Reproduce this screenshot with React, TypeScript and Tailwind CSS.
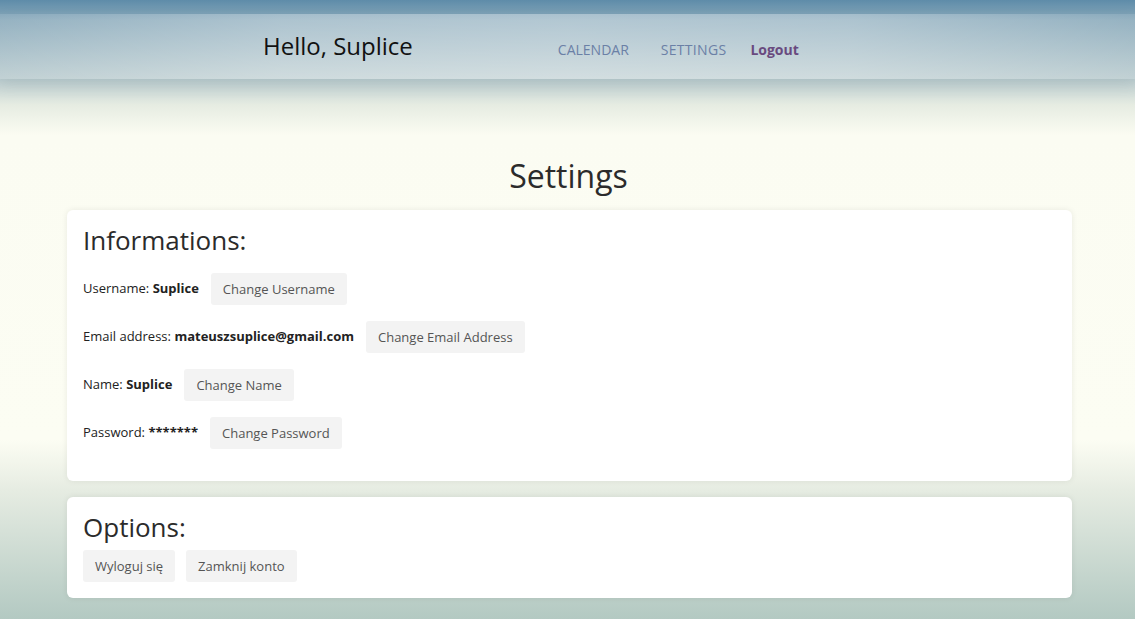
import React from "react";

const rows = [
  { label: "Username:", value: "Suplice", action: "Change Username" },
  { label: "Email address:", value: "mateuszsuplice@gmail.com", action: "Change Email Address" },
  { label: "Name:", value: "Suplice", action: "Change Name" },
  { label: "Password:", value: "*******", action: "Change Password" },
];

const Btn = ({ children }: { children: React.ReactNode }) => (
  <button className="h-8 px-3 rounded-[3px] bg-[#f3f3f3] text-[13px] text-[#555] leading-8">
    {children}
  </button>
);

export default function App() {
  return (
    <div
      className="min-h-screen h-[619px] overflow-hidden bg-[linear-gradient(to_bottom,#5e8ca9_0px,#8aaabb_20px,#bccdd0_80px,#e6ece2_105px,#fbfcf2_135px,#fcfdf3_440px,#e6ece2_490px,#b3c9c2_619px)] text-[#222]"
      style={{ fontFamily: '"Open Sans", "Liberation Sans", sans-serif' }}
    >
      <header className="mt-[14px] h-[65px] bg-[linear-gradient(to_right,rgba(255,255,255,0.1),rgba(255,255,255,0.3)_25%,rgba(255,255,255,0.35)_50%,rgba(255,255,255,0.3)_75%,rgba(255,255,255,0.1))] shadow-[0_6px_14px_rgba(80,110,110,0.12)] flex items-center">
        <h2 className="ml-[263px] text-[24px] text-[#111] -mt-[2px]">Hello, Suplice</h2>
        <nav className="ml-[145px] flex items-center text-[14px] mt-[6px]">
          <a className="text-[#6b80a6]">CALENDAR</a>
          <a className="ml-[32px] text-[#6b80a6] tracking-[0.3px]">SETTINGS</a>
          <a className="ml-[24px] font-bold text-[#694a7f]">Logout</a>
        </nav>
      </header>

      <h1 className="text-center text-[32px] text-[#2b2b2b] mt-[75px] leading-[44px] ml-[2px]">Settings</h1>

      <main className="ml-[67px] w-[1005px] mt-[12px] flex flex-col gap-4">
        <section className="bg-white rounded-md shadow-[0_0_6px_rgba(0,0,0,0.08)] p-4 pb-8">
          <h3 className="text-[26px] leading-[29px] text-[#2b2b2b]">Informations:</h3>
          <div className="mt-[18px] flex flex-col gap-4">
            {rows.map((r) => (
              <div key={r.action} className="flex items-center gap-3 text-[13px]">
                <span>
                  {r.label} <b>{r.value}</b>
                </span>
                <Btn>{r.action}</Btn>
              </div>
            ))}
          </div>
        </section>

        <section className="bg-white rounded-md shadow-[0_0_6px_rgba(0,0,0,0.08)] p-4">
          <h3 className="text-[26px] leading-[29px] text-[#2b2b2b]">Options:</h3>
          <div className="mt-2 flex gap-[11px]">
            <Btn>Wyloguj się</Btn>
            <Btn>Zamknij konto</Btn>
          </div>
        </section>
      </main>
    </div>
  );
}
